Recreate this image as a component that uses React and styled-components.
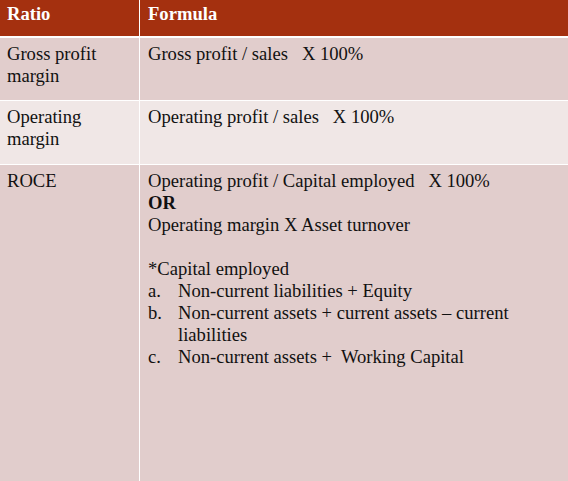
import React from "react";
import styled, { createGlobalStyle } from "styled-components";

const Global = createGlobalStyle`
  html, body {
    margin: 0;
    padding: 0;
    background: #ffffff;
  }
  #root, #root * {
    font-family: "Liberation Serif", "Times New Roman", serif;
  }
`;

const Table = styled.div`
  display: grid;
  grid-template-columns: 139px 1fr;
  grid-template-rows: 38px 63px 64px 1fr;
  column-gap: 1px;
  width: 568px;
  height: 481px;
  background: #ffffff;
`;

const Cell = styled.div`
  background: ${(p) => p.bg};
  color: ${(p) => (p.head ? "#ffffff" : "#111111")};
  font-weight: ${(p) => (p.head ? 700 : 400)};
  font-size: 18.6px;
  line-height: 22px;
  padding: ${(p) => (p.head ? "3px 8px 0 7px" : "5px 8px 0 7px")};
  margin-bottom: ${(p) => p.gap}px;
  box-sizing: border-box;
`;

const FormulaCell = styled(Cell)`
  padding-left: 8px;
`;

const Line = styled.div`
  white-space: pre;
`;

const Strong = styled.div`
  font-weight: 700;
`;

const Blank = styled.div`
  height: 22px;
`;

const List = styled.ol`
  list-style: none;
  margin: 0;
  padding: 0;
`;

const Item = styled.li`
  display: grid;
  grid-template-columns: 30px 1fr;
`;

const Marker = styled.span`
  white-space: pre;
`;

const ItemText = styled.span`
  white-space: pre-wrap;
`;

const COLORS = {
  head: "#a4300f",
  dark: "#e1cdcc",
  light: "#f0e7e6",
};

const rows = [
  { ratio: "Gross profit margin", formula: "Gross profit / sales   X 100%", bg: COLORS.dark },
  { ratio: "Operating margin", formula: "Operating profit / sales   X 100%", bg: COLORS.light },
];

const capital = [
  ["a.", "Non-current liabilities + Equity"],
  ["b.", "Non-current assets + current assets \u2013 current liabilities"],
  ["c.", "Non-current assets +  Working Capital"],
];

export default function App() {
  return (
    <>
      <Global />
      <Table>
        <Cell head bg={COLORS.head} gap={2}>Ratio</Cell>
        <FormulaCell head bg={COLORS.head} gap={2}>Formula</FormulaCell>
        {rows.map((r) => (
          <React.Fragment key={r.ratio}>
            <Cell bg={r.bg} gap={1}>{r.ratio}</Cell>
            <FormulaCell bg={r.bg} gap={1}>
              <Line>{r.formula}</Line>
            </FormulaCell>
          </React.Fragment>
        ))}
        <Cell bg={COLORS.dark} gap={0}>ROCE</Cell>
        <FormulaCell bg={COLORS.dark} gap={0}>
          <Line>{"Operating profit / Capital employed   X 100%"}</Line>
          <Strong>OR</Strong>
          <Line>Operating margin X Asset turnover</Line>
          <Blank />
          <Line>*Capital employed</Line>
          <List>
            {capital.map(([k, t]) => (
              <Item key={k}>
                <Marker>{k}</Marker>
                <ItemText>{t}</ItemText>
              </Item>
            ))}
          </List>
        </FormulaCell>
      </Table>
    </>
  );
}
